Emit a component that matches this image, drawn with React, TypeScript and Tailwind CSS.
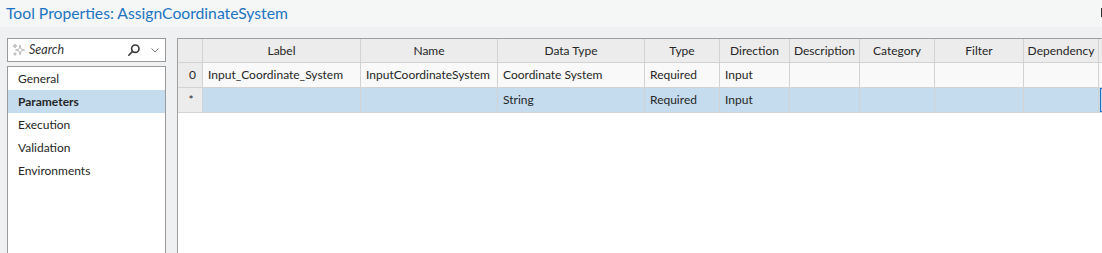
import React from "react";

const cols = [25, 158, 137, 147, 75, 70, 70, 75, 89, 75];
const headers = ["", "Label", "Name", "Data Type", "Type", "Direction", "Description", "Category", "Filter", "Dependency"];
const row0 = ["0", "Input_Coordinate_System", "InputCoordinateSystem", "Coordinate System", "Required", "Input", "", "", "", ""];
const row1 = ["*", "", "", "String", "Required", "Input", "", "", "", ""];

function Sparkle() {
  return (
    <svg width="14" height="14" viewBox="0 0 14 14" fill="none" stroke="#b4b4b4" strokeWidth="0.9">
      <path d="M8 2 L9 6 L12.5 7 L9 8 L8 12 L7 8 L3.5 7 L7 6 Z" />
      <path d="M3 1 L3.4 2.6 L5 3 L3.4 3.4 L3 5 L2.6 3.4 L1 3 L2.6 2.6 Z" />
      <path d="M3 9.5 L3.3 10.7 L4.5 11 L3.3 11.3 L3 12.5 L2.7 11.3 L1.5 11 L2.7 10.7 Z" />
    </svg>
  );
}

function Magnifier() {
  return (
    <svg width="14" height="14" viewBox="0 0 14 14" fill="none" stroke="#3a3a3a" strokeWidth="1.6">
      <circle cx="8.3" cy="5.7" r="3.7" />
      <path d="M5.6 8.4 L1.8 12.2" strokeLinecap="round" />
    </svg>
  );
}

function Chevron() {
  return (
    <svg width="10" height="10" viewBox="0 0 10 10" fill="none" stroke="#777" strokeWidth="1">
      <path d="M1.5 3.5 L5 7 L8.5 3.5" />
    </svg>
  );
}

export default function App() {
  const font = { fontFamily: '"Lato", "Liberation Sans", sans-serif' };
  return (
    <div className="w-[1102px] h-[253px] overflow-hidden bg-[#eef0f2] text-[#262626]" style={font}>
      <div className="h-[27px] bg-[#f5f6f6] flex items-center pl-[6px] relative">
        <span className="text-[15.7px] text-[#1c74c2] leading-none">Tool Properties: AssignCoordinateSystem</span>
        <div className="absolute right-0 top-[8px] w-[1px] h-[9px] bg-[#333]" />
      </div>
      <div className="flex pt-[11px]">
        <div className="ml-[7px] w-[159px] flex flex-col gap-[4px]">
          <div className="h-[24px] border border-[#9a9a9a] bg-white flex items-center pl-[4px] pr-[4px]">
            <Sparkle />
            <span className="ml-[3px] italic text-[12.5px] text-[#333] flex-1">Search</span>
            <Magnifier />
            <span className="ml-[9px] mr-[1px]"><Chevron /></span>
          </div>
          <div className="h-[200px] border border-[#9a9a9a] bg-white text-[12px]">
            {["General", "Parameters", "Execution", "Validation", "Environments"].map((t) => (
              <div
                key={t}
                className={
                  "h-[23px] flex items-center pl-[10px] " +
                  (t === "Parameters" ? "bg-[#c5dcef] font-bold" : "")
                }
              >
                {t}
              </div>
            ))}
          </div>
        </div>
        <div className="ml-[11px] flex-1 h-[215px] border-l border-t border-[#a0a0a0] bg-white text-[12px]">
          <div className="flex h-[24px] bg-[#ececec]">
            {headers.map((h, i) => (
              <div
                key={i}
                className="shrink-0 border-r border-b border-[#d2d2d2] flex items-center justify-center"
                style={{ width: cols[i] }}
              >
                {h}
              </div>
            ))}
            <div className="flex-1 border-b border-[#d2d2d2]" />
          </div>
          <div className="flex h-[25px] bg-[#f9f9f9]">
            {row0.map((c, i) => (
              <div
                key={i}
                className={
                  "shrink-0 border-r border-b border-[#d2d2d2] flex items-center " +
                  (i === 0 ? "justify-end pr-[6px] bg-[#ececec]" : "pl-[5px]")
                }
                style={{ width: cols[i] }}
              >
                {c}
              </div>
            ))}
            <div className="flex-1 border-b border-[#d2d2d2]" />
          </div>
          <div className="flex h-[25px] bg-[#c5dcef]">
            {row1.map((c, i) => (
              <div
                key={i}
                className={
                  "shrink-0 border-r border-b border-[#d2d2d2] flex items-center " +
                  (i === 0 ? "justify-center pl-[2px] bg-[#ececec]" : "pl-[5px]")
                }
                style={{ width: cols[i] }}
              >
                {c}
              </div>
            ))}
            <div className="flex-1 border-b border-[#d2d2d2] flex">
              <div className="ml-[1px] w-full border-l border-t border-b border-[#1e6fc4]" />
            </div>
          </div>
        </div>
      </div>
    </div>
  );
}
